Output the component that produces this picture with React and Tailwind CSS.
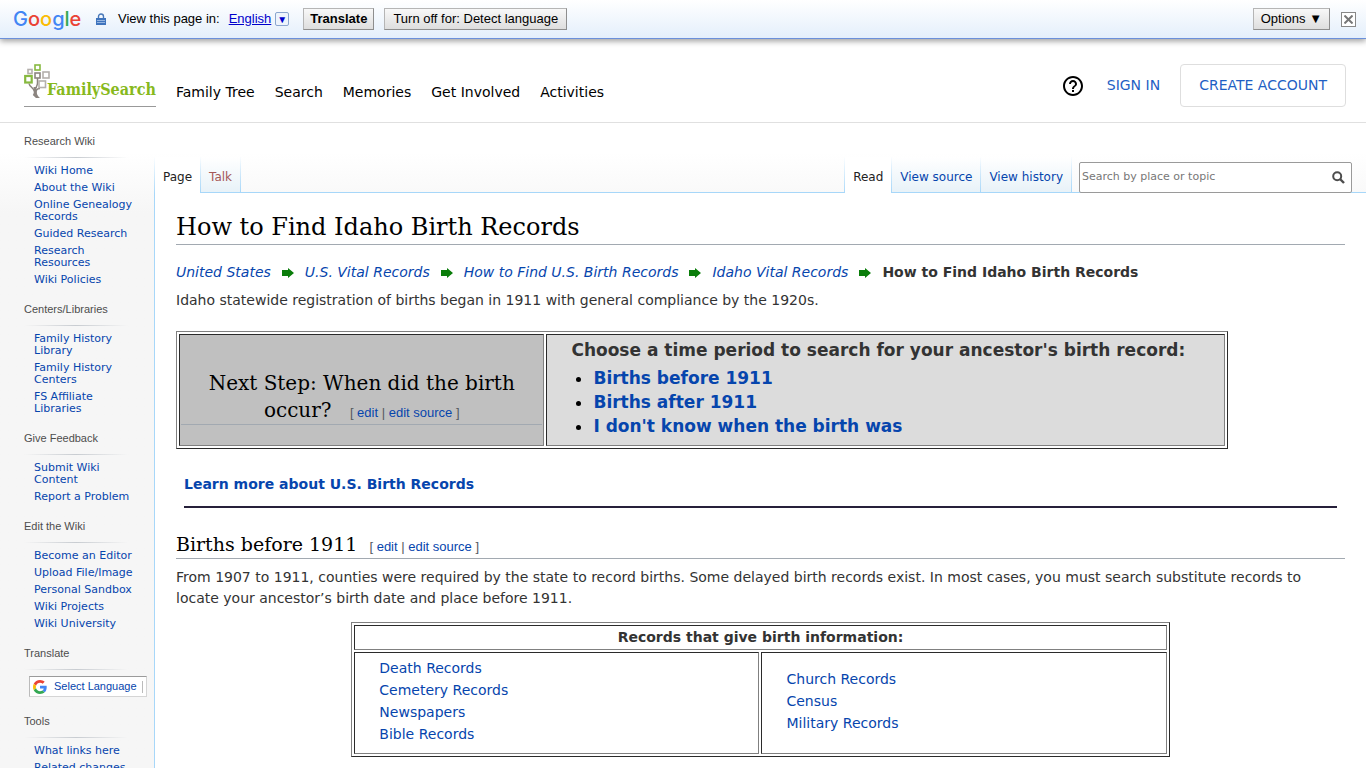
import React, { useState } from 'react'

const sidebar = [
  {
    title: 'Research Wiki',
    links: ['Wiki Home', 'About the Wiki', 'Online Genealogy Records', 'Guided Research', 'Research Resources', 'Wiki Policies'],
  },
  {
    title: 'Centers/Libraries',
    links: ['Family History Library', 'Family History Centers', 'FS Affiliate Libraries'],
  },
  {
    title: 'Give Feedback',
    links: ['Submit Wiki Content', 'Report a Problem'],
  },
  {
    title: 'Edit the Wiki',
    links: ['Become an Editor', 'Upload File/Image', 'Personal Sandbox', 'Wiki Projects', 'Wiki University'],
  },
  { title: 'Translate', links: [] },
  { title: 'Tools', links: ['What links here', 'Related changes'] },
]

const navLinks = ['Family Tree', 'Search', 'Memories', 'Get Involved', 'Activities']
const crumbs = ['United States', 'U.S. Vital Records', 'How to Find U.S. Birth Records', 'Idaho Vital Records']
const periods = ['Births before 1911', 'Births after 1911', "I don't know when the birth was"]
const leftRecords = ['Death Records', 'Cemetery Records', 'Newspapers', 'Bible Records']
const rightRecords = ['Church Records', 'Census', 'Military Records']

const GoogleG = () => (
  <svg viewBox="0 0 48 48" className="w-[14px] h-[14px] shrink-0" aria-hidden="true">
    <path fill="#EA4335" d="M24 9.5c3.54 0 6.71 1.22 9.21 3.6l6.85-6.85C35.9 2.38 30.47 0 24 0 14.62 0 6.51 5.38 2.56 13.22l7.98 6.19C12.43 13.72 17.74 9.5 24 9.5z" />
    <path fill="#4285F4" d="M46.98 24.55c0-1.57-.15-3.09-.38-4.55H24v9.02h12.94c-.58 2.96-2.26 5.48-4.78 7.18l7.73 6c4.51-4.18 7.09-10.36 7.09-17.65z" />
    <path fill="#FBBC05" d="M10.53 28.59c-.48-1.45-.76-2.99-.76-4.59s.27-3.14.76-4.59l-7.98-6.19C.92 16.46 0 20.12 0 24c0 3.88.92 7.54 2.56 10.78l7.97-6.19z" />
    <path fill="#34A853" d="M24 48c6.48 0 11.93-2.13 15.89-5.81l-7.73-6c-2.15 1.45-4.92 2.3-8.16 2.3-6.26 0-11.57-4.22-13.47-9.91l-7.98 6.19C6.51 42.62 14.62 48 24 48z" />
  </svg>
)

const TreeLogo = () => (
  <svg viewBox="0 0 27 34" className="w-[27px] h-[34px] shrink-0" fill="none" aria-hidden="true">
    <path d="M13.5 14v5c0 2-1 3-1.5 5M5 19.500c.5 3.500 4.500 4 5.500 8M16 24.500c-3.500 0-4.500 2-4 6" stroke="#8c8580" strokeWidth="1.5" />
    <path d="M9.500 23c.8 4 .4 6.500-.7 8l3.200 3h4c-3-2.500-4.300-6-3.300-11z" fill="#8c8580" />
    <g strokeWidth="1.6">
      <rect x="11" y="1" width="5" height="5" stroke="#87b940" />
      <rect x="4" y="5.500" width="4" height="4" stroke="#b4b0ac" />
      <rect x="11" y="9" width="5" height="5" stroke="#8c8580" />
      <rect x="19" y="8" width="6" height="6" stroke="#b4b0ac" />
      <rect x="1.200" y="12" width="6.500" height="6.500" stroke="#87b940" strokeWidth="2.2" />
      <rect x="15" y="17" width="6.500" height="6.500" stroke="#b4b0ac" fill="#fff" />
    </g>
  </svg>
)

const LockIcon = () => (
  <svg viewBox="0 0 10 12" className="w-[10px] h-3 shrink-0" aria-hidden="true">
    <path d="M2.5 6V3.5a2.5 2.5 0 0 1 5 0V6" fill="none" stroke="#4a78b8" strokeWidth="1.4" />
    <path d="M0 5h10v7H0z" fill="#3f74bd" />
    <path d="M1 7.5h8M1 9.5h8" stroke="#a9c4e8" strokeWidth=".8" />
  </svg>
)

const HelpIcon = () => (
  <svg viewBox="0 0 24 24" className="w-6 h-6" fill="#000" aria-hidden="true">
    <path d="M11 18h2v-2h-2v2zm1-16C6.48 2 2 6.48 2 12s4.48 10 10 10 10-4.48 10-10S17.52 2 12 2zm0 18c-4.41 0-8-3.59-8-8s3.59-8 8-8 8 3.59 8 8-3.59 8-8 8zm0-14c-2.21 0-4 1.79-4 4h2c0-1.1.9-2 2-2s2 .9 2 2c0 2-3 1.75-3 5h2c0-2.25 3-2.5 3-5 0-2.21-1.79-4-4-4z" />
  </svg>
)

const Arrow = () => (
  <svg viewBox="0 0 12 10" className="w-3 h-[10px] shrink-0" aria-hidden="true">
    <path d="M0 2h6V0l6 5-6 5V8H0z" fill="#0a7d0a" />
  </svg>
)

const EditLinks = () => (
  <span className="font-['Liberation_Sans',sans-serif] text-[13px] leading-none text-[#54595d] whitespace-nowrap">
    [ <a href="#" className="text-[#0645ad]">edit</a> | <a href="#" className="text-[#0645ad]">edit source</a> ]
  </span>
)

const GoogleBar = ({ onClose }) => (
  <div className="flex items-center h-[39px] px-[10px] border-b border-[#6b90da] bg-linear-to-b from-white to-[#e4effb] shadow-[0_2px_6px_rgba(0,0,0,0.4)] font-['Liberation_Sans',sans-serif] text-[13px] text-black">
    <div className="w-[72px] ml-[3px] font-['Inter',sans-serif] text-[20px] leading-6 font-medium" aria-label="Google">
      <span className="text-[#4285f4]">G</span>
      <span className="text-[#ea4335]">o</span>
      <span className="text-[#fbbc05]">o</span>
      <span className="text-[#4285f4]">g</span>
      <span className="text-[#34a853]">l</span>
      <span className="text-[#ea4335]">e</span>
    </div>
    <div className="ml-[11px]"><LockIcon /></div>
    <span className="ml-3">View this page in:</span>
    <a href="#" className="ml-[9px] flex items-center gap-1 text-[#0000cc]">
      <span className="underline">English</span>
      <span className="flex items-center justify-center w-[14px] h-[14px] border border-[#8ba6cf] rounded-xs bg-[#eef4fc] text-[10px]">▼</span>
    </a>
    <button className="ml-[14px] h-[22px] px-1.5 border border-[#b5b5b5] border-b-[#8e8e8e] border-r-[#8e8e8e] bg-linear-to-b from-[#f8f8f8] to-[#dedede] font-bold">Translate</button>
    <button className="ml-[10px] h-[22px] px-2 border border-[#b5b5b5] border-b-[#8e8e8e] border-r-[#8e8e8e] bg-linear-to-b from-[#f8f8f8] to-[#dedede]">Turn off for: Detect language</button>
    <button className="ml-auto h-[22px] px-[7px] border border-[#b5b5b5] border-b-[#8e8e8e] border-r-[#8e8e8e] bg-linear-to-b from-[#f8f8f8] to-[#dedede]">Options ▼</button>
    <button onClick={onClose} aria-label="Close" className="ml-[11px] flex items-center justify-center w-[15px] h-[15px] border border-[#888] bg-white">
      <svg viewBox="0 0 9 9" className="w-[9px] h-[9px]" stroke="#777" strokeWidth="2"><path d="M0.5 0.5l8 8M8.5 0.5l-8 8" /></svg>
    </button>
  </div>
)

const Header = () => (
  <header className="flex h-[84px] pt-[25px] pl-6 pr-5 border-b border-[#e0e0e0]">
    <a href="#" className="flex items-start w-[132px] h-[43px] border-b border-[#999]">
      <TreeLogo />
      <span className="-ml-1 mt-4 font-['DejaVu_Serif_Condensed','DejaVu_Serif',serif] font-bold text-[16px] leading-5 text-[#87b91d]">FamilySearch</span>
    </a>
    <nav className="flex gap-5 ml-5 mt-[18px] text-[14px] leading-5 text-black">
      {navLinks.map(n => <a key={n} href="#">{n}</a>)}
    </nav>
    <div className="flex items-center ml-auto h-[43px] text-[14px] text-[#1f5fc4]">
      <a href="#" aria-label="Help"><HelpIcon /></a>
      <a href="#" className="ml-[22px]">SIGN IN</a>
      <a href="#" className="flex items-center h-[43px] px-[18px] ml-5 border border-[#dedede] rounded">CREATE ACCOUNT</a>
    </div>
  </header>
)

const Sidebar = () => (
  <aside className="w-[154px] shrink-0 pt-[10px] pl-6 text-[11px]">
    {sidebar.map(s => (
      <section key={s.title} className="mb-[10px]">
        <h3 className="font-['Liberation_Sans',sans-serif] leading-4 text-[#4d4d4d]">{s.title}</h3>
        <div className="h-px mt-2 mr-[26px] bg-linear-to-r from-transparent via-[#c8ccd1] to-transparent" />
        {s.title === 'Translate' ? (
          <div className="pt-[6px] pb-1.5 pl-[5px]">
            <button className="flex items-center w-[118px] h-[21px] pl-[3px] border border-[#d5d5d5] border-t-[#9b9b9b] border-l-[#bbb] bg-white font-['Liberation_Sans',sans-serif] text-[11px] text-[#0645ad] whitespace-nowrap">
              <GoogleG />
              <span className="ml-[7px]">Select Language</span>
              <span className="w-px h-3 ml-[5px] bg-[#bbb]" />
            </button>
          </div>
        ) : (
          <ul className="pt-[7px] pl-[10px]">
            {s.links.map(l => (
              <li key={l} className="max-w-[100px] pb-[5px] leading-3"><a href="#" className="text-[#0645ad]">{l}</a></li>
            ))}
          </ul>
        )}
      </section>
    ))}
  </aside>
)

const Tabs = () => {
  const [query, setQuery] = useState('')
  return (
    <div className="flex items-end h-[70px] pr-[14px] border-b border-[#a7d7f9] text-[12px] leading-4">
      {/* the selected tab is one pixel taller so it covers the line below */}
      <div className="flex items-start h-[35px]">
        <a href="#" className="h-9 pt-3 px-2 border-l [border-image:linear-gradient(transparent,#a7d7f9)_1] bg-white text-[#222]">Page</a>
        <a href="#" className="h-[35px] pt-3 px-2 border-x [border-image:linear-gradient(transparent,#a7d7f9)_1] bg-linear-to-b from-white to-[#e8f2f8] text-[#a55858]">Talk</a>
      </div>
      <div className="flex items-start h-[35px] ml-auto">
        <a href="#" className="h-9 pt-3 px-2 border-l [border-image:linear-gradient(transparent,#a7d7f9)_1] bg-white text-[#222]">Read</a>
        <a href="#" className="h-[35px] pt-3 px-2 border-l [border-image:linear-gradient(transparent,#a7d7f9)_1] bg-linear-to-b from-white to-[#e8f2f8] text-[#0645ad]">View source</a>
        <a href="#" className="h-[35px] pt-3 px-2 border-x [border-image:linear-gradient(transparent,#a7d7f9)_1] bg-linear-to-b from-white to-[#e8f2f8] text-[#0645ad]">View history</a>
      </div>
      <form className="flex items-center w-[273px] h-[31px] ml-[7px] -mb-px pl-[2px] pb-px pr-1.5 border border-[#9a9a9a] rounded-xs bg-white" onSubmit={e => e.preventDefault()}>
        <input
          type="search"
          aria-label="Search by place or topic"
          placeholder="Search by place or topic"
          value={query}
          onChange={e => setQuery(e.target.value)}
          className="flex-1 min-w-0 text-[11px] outline-none placeholder:text-[#777]"
        />
        <button aria-label="Search">
          <svg viewBox="0 0 13 13" className="w-[13px] h-[13px]" fill="none" stroke="#4d4d4d" strokeWidth="2"><circle cx="5.2" cy="5.2" r="4" /><path d="M8 8l4 4" strokeWidth="2.4" /></svg>
        </button>
      </form>
    </div>
  )
}

const Article = () => (
  <article className="flex-1 px-[21px] border-l border-[#a7d7f9] bg-white text-[14px] leading-[21px] text-[#333]">
    <h1 className="pt-[17px] border-b border-[#a2a9b1] font-['DejaVu_Serif',serif] text-[24px] leading-[34px] text-black">How to Find Idaho Birth Records</h1>
    <div className="flex flex-wrap items-center gap-x-[11px] mt-[17px]">
      {crumbs.map(c => (
        <React.Fragment key={c}>
          <a href="#" className="italic text-[#0645ad]">{c}</a>
          <Arrow />
        </React.Fragment>
      ))}
      <b>How to Find Idaho Birth Records</b>
    </div>
    <p className="mt-[7px]">Idaho statewide registration of births began in 1911 with general compliance by the 1920s.</p>

    <table className="w-[90%] mt-5 border-separate border-spacing-[2px] border border-[#808080] border-b-[#2b2b2b] border-r-[#2b2b2b]">
      <tbody>
        <tr>
          <td className="w-[35%] px-px pt-[15px] border border-[#2b2b2b] border-b-[#808080] border-r-[#808080] bg-[#c0c0c0] text-center">
            <h2 className="px-5 border-b border-[#a2a9b1] font-['DejaVu_Serif',serif] text-[20px] leading-[27px] text-black">
              Next Step: When did the birth occur? <span className="ml-3"><EditLinks /></span>
            </h2>
          </td>
          <td className="h-[112px] pl-6 align-top border border-[#2b2b2b] border-b-[#808080] border-r-[#808080] bg-[#dcdcdc] text-[17px] font-bold">
            <p className="pt-[3px] leading-6">Choose a time period to search for your ancestor's birth record:</p>
            <ul className="pt-1 pl-[22px] list-disc leading-6 marker:text-black">
              {periods.map(p => <li key={p}><a href="#" className="text-[#0645ad]">{p}</a></li>)}
            </ul>
          </td>
        </tr>
      </tbody>
    </table>

    <div className="mx-2 mt-[25px] pb-[11px] border-b-2 border-[#26203a] font-bold">
      <a href="#" className="text-[#0645ad]">Learn more about U.S. Birth Records</a>
    </div>

    <h2 className="pt-[22px] border-b border-[#a2a9b1] font-['DejaVu_Serif',serif] text-[19px] leading-[28px] text-black">
      Births before 1911 <span className="ml-1.5"><EditLinks /></span>
    </h2>
    <p className="mt-2">
      From 1907 to 1911, counties were required by the state to record births. Some delayed birth records exist. In most cases, you must search substitute records to locate your ancestor’s birth date and place before 1911.
    </p>

    <table className="w-[70%] mx-auto mt-[13px] mb-3 border-separate border-spacing-[2px] border border-[#808080] border-b-[#2b2b2b] border-r-[#2b2b2b]">
      <thead>
        <tr>
          <th colSpan={2} className="h-[25px] border border-[#2b2b2b] border-b-[#808080] border-r-[#808080]">Records that give birth information:</th>
        </tr>
      </thead>
      <tbody>
        <tr>
          {[leftRecords, rightRecords].map((list, i) => (
            <td key={i} className="w-1/2 h-[102px] pl-6 pb-1 border border-[#2b2b2b] border-b-[#808080] border-r-[#808080] leading-[22px]">
              <ul>
                {list.map(r => <li key={r}><a href="#" className="text-[#0645ad]">{r}</a></li>)}
              </ul>
            </td>
          ))}
        </tr>
      </tbody>
    </table>
  </article>
)

const App = () => {
  const [showBar, setShowBar] = useState(true)

  return (
    <div className="flex flex-col min-h-screen bg-white font-['DejaVu_Sans',Verdana,sans-serif]">
      {showBar && <GoogleBar onClose={() => setShowBar(false)} />}
      <Header />
      <div className="flex flex-1 bg-linear-to-b from-white from-[30px] to-[#f6f6f6] to-[90px]">
        <Sidebar />
        <main className="flex flex-col flex-1 min-w-0">
          <Tabs />
          <Article />
        </main>
      </div>
    </div>
  )
}

export default App
